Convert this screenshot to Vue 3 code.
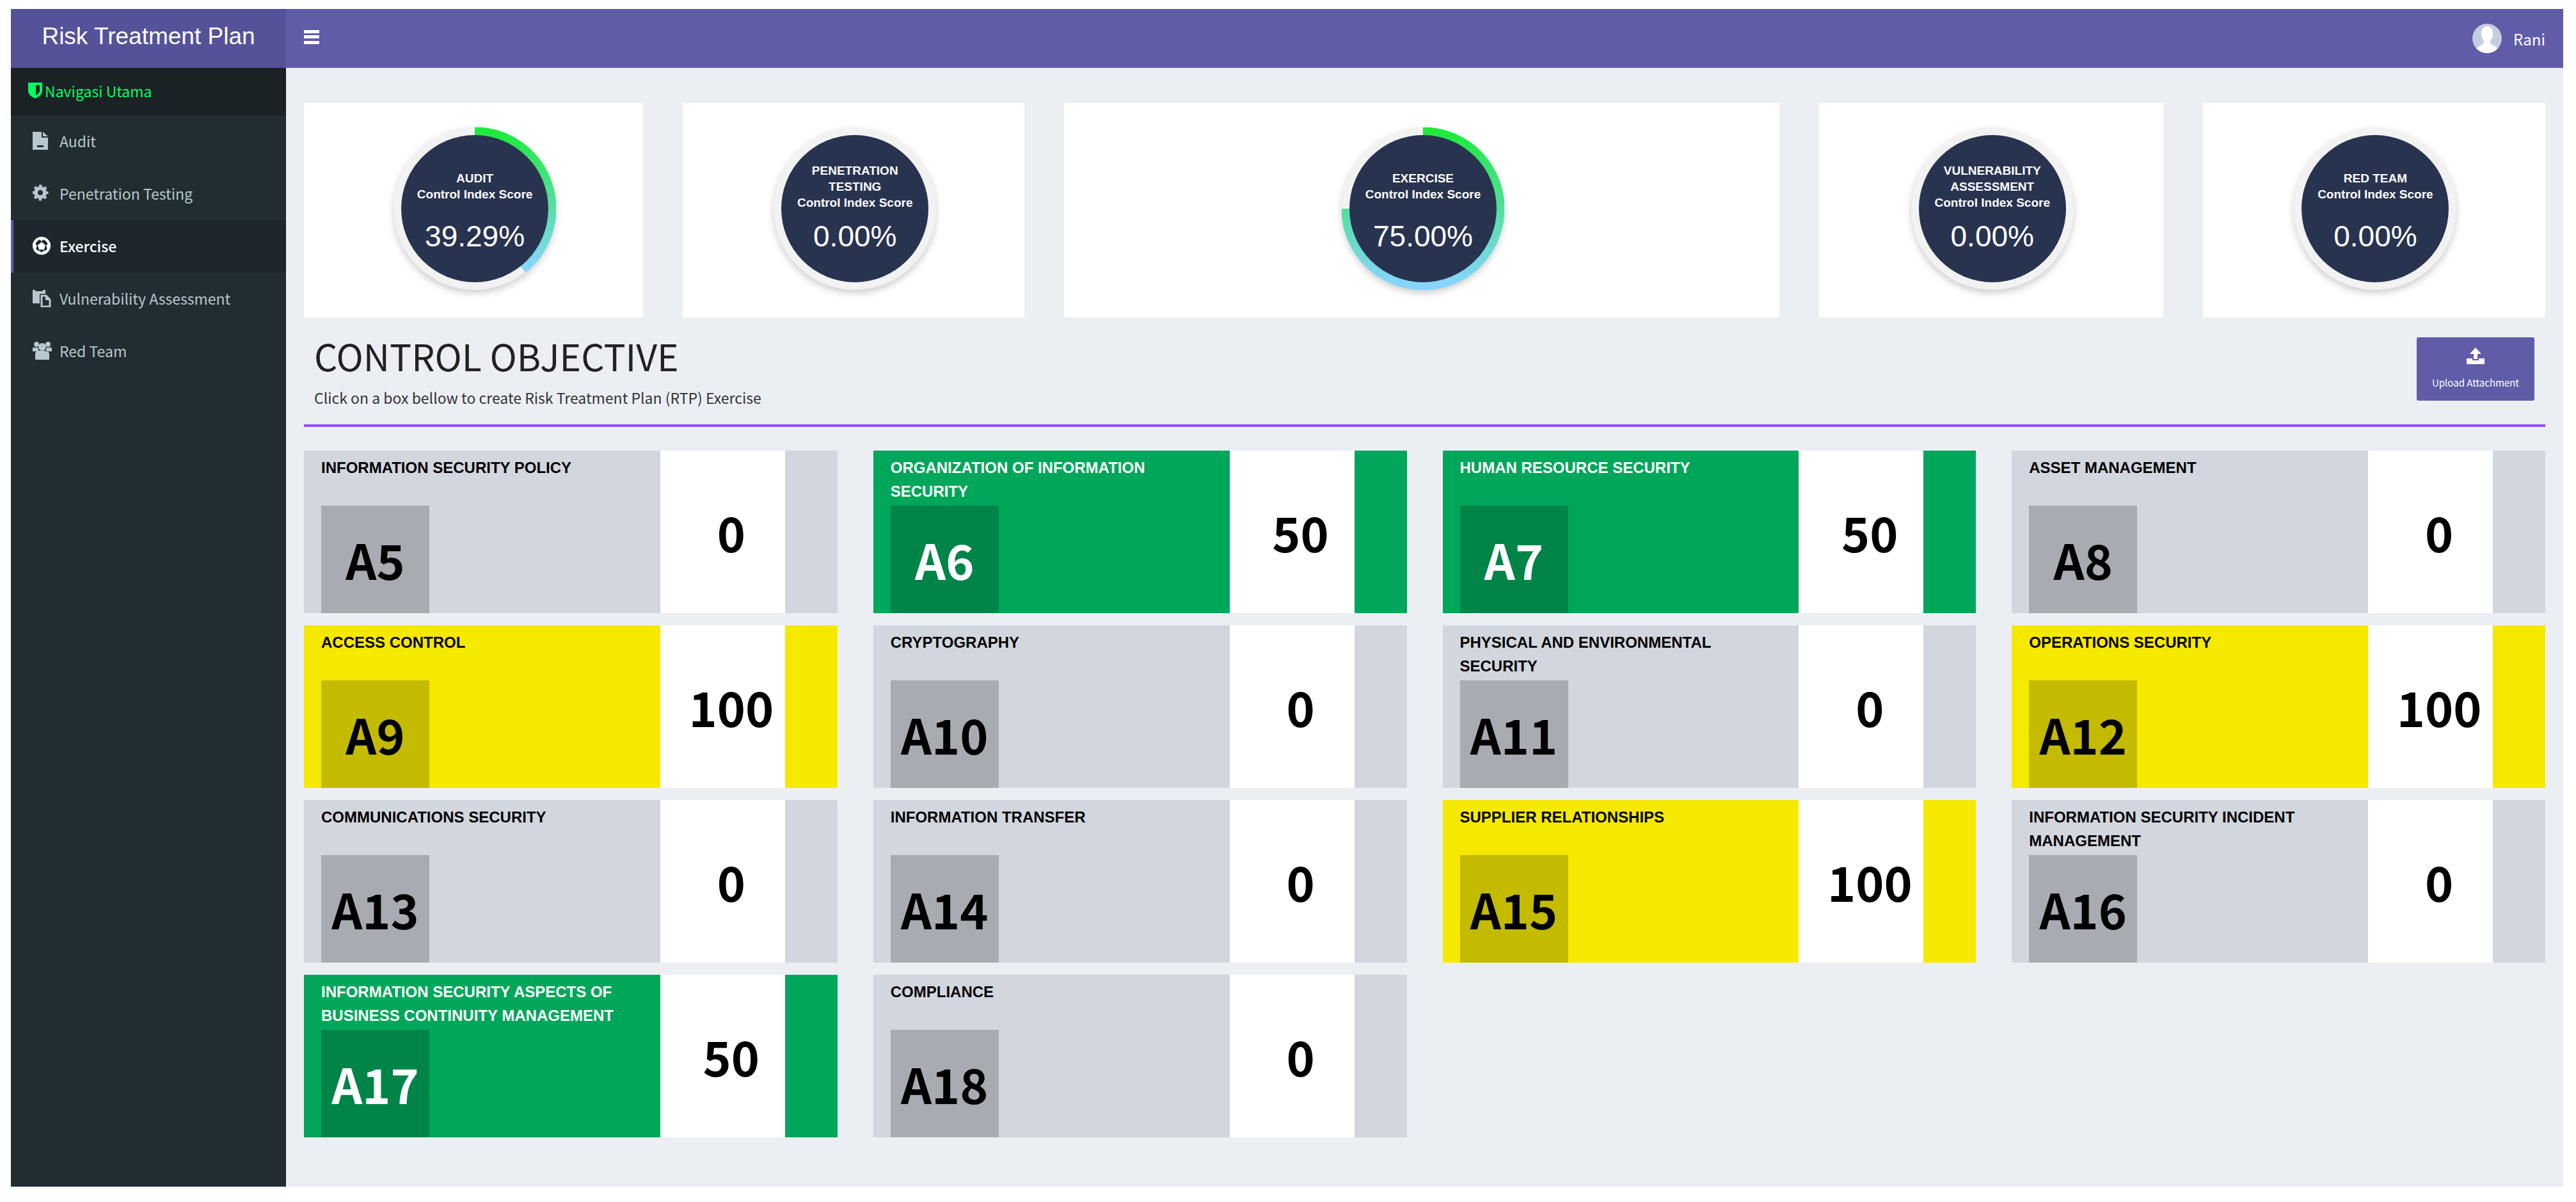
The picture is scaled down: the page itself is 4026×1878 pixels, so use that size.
<script setup>
const menu = [
  { name: 'Audit', icon: 'file' },
  { name: 'Penetration Testing', icon: 'gear' },
  { name: 'Exercise', icon: 'ball', active: true },
  { name: 'Vulnerability Assessment', icon: 'paste' },
  { name: 'Red Team', icon: 'users' },
]

const scores = [
  { title: ['AUDIT'], value: 39.29 },
  { title: ['PENETRATION', 'TESTING'], value: 0 },
  { title: ['EXERCISE'], value: 75 },
  { title: ['VULNERABILITY', 'ASSESSMENT'], value: 0 },
  { title: ['RED TEAM'], value: 0 },
]

const controls = [
  { code: 'A5', title: 'INFORMATION SECURITY POLICY', score: 0 },
  { code: 'A6', title: 'ORGANIZATION OF INFORMATION SECURITY', score: 50 },
  { code: 'A7', title: 'HUMAN RESOURCE SECURITY', score: 50 },
  { code: 'A8', title: 'ASSET MANAGEMENT', score: 0 },
  { code: 'A9', title: 'ACCESS CONTROL', score: 100 },
  { code: 'A10', title: 'CRYPTOGRAPHY', score: 0 },
  { code: 'A11', title: 'PHYSICAL AND ENVIRONMENTAL SECURITY', score: 0 },
  { code: 'A12', title: 'OPERATIONS SECURITY', score: 100 },
  { code: 'A13', title: 'COMMUNICATIONS SECURITY', score: 0 },
  { code: 'A14', title: 'INFORMATION TRANSFER', score: 0 },
  { code: 'A15', title: 'SUPPLIER RELATIONSHIPS', score: 100 },
  { code: 'A16', title: 'INFORMATION SECURITY INCIDENT MANAGEMENT', score: 0 },
  { code: 'A17', title: 'INFORMATION SECURITY ASPECTS OF BUSINESS CONTINUITY MANAGEMENT', score: 50 },
  { code: 'A18', title: 'COMPLIANCE', score: 0 },
]

const tone = (score) => (score >= 100 ? 'yellow' : score > 0 ? 'green' : 'grey')

// Arc from twelve o'clock, clockwise, on a 254-unit gauge
const arc = (value) => {
  const a = (value / 100) * 2 * Math.PI
  const r = 121
  const x = 127 + r * Math.sin(a)
  const y = 127 - r * Math.cos(a)
  return `M127 ${127 - r} A${r} ${r} 0 ${value > 50 ? 1 : 0} 1 ${x.toFixed(2)} ${y.toFixed(2)}`
}
</script>

<template>
  <div class="page">
    <header class="topbar">
      <a class="brand" href="#">Risk Treatment Plan</a>
      <nav class="navbar">
        <button class="toggle" type="button" aria-label="Toggle navigation">
          <svg viewBox="0 0 24 22" width="24" height="22"><path d="M0 0h24v5H0zM0 8h24v5H0zM0 17h24v5H0z" fill="currentColor" /></svg>
        </button>
        <a class="user" href="#">
          <svg viewBox="0 0 46 46" width="46" height="46">
            <clipPath id="face"><circle cx="23" cy="23" r="23" /></clipPath>
            <g clip-path="url(#face)">
              <rect width="46" height="46" fill="#c5cde0" />
              <path d="M23 4c6 0 9 5 9 11 0 6-2 9-4 12 0 4 1 5 5 7 4 2 7 3 8 12H5c1-9 4-10 8-12 4-2 5-3 5-7-2-3-4-6-4-12 0-6 3-11 9-11z" fill="#fff" />
            </g>
          </svg>
          <span>Rani</span>
        </a>
      </nav>
    </header>

    <div class="body">
      <aside class="sidebar">
        <div class="side-title">
          <svg viewBox="0 0 22 25" width="22" height="25"><path d="M0 0h22v12c0 7-5 10-11 13C5 22 0 19 0 12zM12 4v16c3-2 6-4 6-8V4z" fill="currentColor" fill-rule="evenodd" /></svg>
          <span>Navigasi Utama</span>
        </div>
        <a v-for="m in menu" :key="m.name" href="#" class="item" :class="{ active: m.active }">
          <svg class="icon" viewBox="0 0 30 28" width="30" height="28">
            <path v-if="m.icon === 'file'" d="M0 0h14v9h10v19H0zM16 0l8 7h-8zM7 21v3h10v-3z" fill="currentColor" fill-rule="evenodd" />
            <g v-else-if="m.icon === 'gear'">
              <circle cx="12" cy="13" r="7" fill="none" stroke="currentColor" stroke-width="6" />
              <circle cx="12" cy="13" r="10" fill="none" stroke="currentColor" stroke-width="5" stroke-dasharray="4 3.85" stroke-dashoffset="2" />
            </g>
            <g v-else-if="m.icon === 'ball'">
              <circle cx="14" cy="14" r="12" fill="none" stroke="currentColor" stroke-width="4" />
              <path d="M14 8l6 5-2 7h-8l-2-7zM8 1h12l-6 6zM0 10l7 3-2 7-4-2zM28 10l-7 3 2 7 4-2zM6 21l6 1 1 6-7-3zM22 21l-6 1-1 6 7-3z" fill="currentColor" />
            </g>
            <g v-else-if="m.icon === 'paste'">
              <path d="M0 1h4v2h12V1h4v6h-9v15H0z" fill="currentColor" />
              <path d="M14 10h7l6 6v11H14z" fill="none" stroke="currentColor" stroke-width="3" />
              <path d="M20 9l8 8h-8z" fill="currentColor" />
            </g>
            <g v-else fill="currentColor">
              <circle cx="6" cy="4" r="4" /><circle cx="24" cy="4" r="4" /><circle cx="15" cy="8" r="6" />
              <path d="M0 9h8l2 6H0zM30 9h-8l-2 6h10zM4 28V19c0-3 3-5 5-5h12c2 0 5 2 5 5v9z" />
            </g>
          </svg>
          <span>{{ m.name }}</span>
        </a>
      </aside>

      <main class="content">
        <section class="scores">
          <article v-for="s in scores" :key="s.title[0]" class="score-card">
            <div class="gauge">
              <svg v-if="s.value" class="ring" viewBox="0 0 254 254">
                <defs>
                  <linearGradient id="sweep" x1="0" y1="0" x2="0" y2="1">
                    <stop offset="0" stop-color="#1eea3c" />
                    <stop offset="1" stop-color="#87d5ff" />
                  </linearGradient>
                </defs>
                <path :d="arc(s.value)" fill="none" stroke="url(#sweep)" stroke-width="13" />
              </svg>
              <div class="disc">
                <div class="disc-title">
                  <span v-for="t in s.title" :key="t">{{ t }}</span>
                  <span>Control Index Score</span>
                </div>
                <div class="disc-value">{{ s.value.toFixed(2) }}%</div>
              </div>
            </div>
          </article>
        </section>

        <section class="heading">
          <div>
            <h1>CONTROL OBJECTIVE</h1>
            <p>Click on a box bellow to create Risk Treatment Plan (RTP) Exercise</p>
          </div>
          <button class="upload" type="button">
            <svg viewBox="0 0 28 26" width="28" height="26"><path d="M14 0l9 10h-6v8h-6v-8H5zM0 17h9v3h10v-3h9v9H0z" fill="currentColor" /></svg>
            <span>Upload Attachment</span>
          </button>
        </section>

        <section class="controls">
          <a v-for="c in controls" :key="c.code" href="#" class="control" :class="tone(c.score)">
            <div class="info">
              <div class="name">{{ c.title }}</div>
              <div class="code">{{ c.code }}</div>
            </div>
            <div class="value">{{ c.score }}</div>
          </a>
        </section>
      </main>
    </div>
  </div>
</template>

<style>
body {
  margin: 0;
  background: #fff;
}
</style>

<style scoped>
.page {
  box-sizing: border-box;
  min-height: 100vh;
  padding: 14px 20px 24px 17px;
  display: flex;
  flex-direction: column;
  font-family: "Noto Sans CJK SC", "Noto Sans", sans-serif;
  font-size: 23px;
}
a {
  color: inherit;
  text-decoration: none;
}
button {
  border: 0;
  padding: 0;
  font-family: inherit;
  color: #fff;
}
svg {
  display: block;
  flex: none;
}
.topbar {
  display: flex;
  height: 92px;
  color: #fff;
}
.brand {
  width: 430px;
  flex: none;
  background: #555299;
  font: 37px/86px "Liberation Sans", Arial, sans-serif;
  text-align: center;
}
.navbar {
  flex: 1;
  display: flex;
  align-items: center;
  justify-content: space-between;
  padding: 0 28px;
  background: #605ca8;
}
.toggle {
  background: none;
  padding-bottom: 4px;
}
.user {
  display: flex;
  align-items: center;
  gap: 18px;
  font-size: 24px;
}
.body {
  flex: 1;
  display: flex;
}
.sidebar {
  width: 430px;
  flex: none;
  background: #222d32;
  color: #b8c7ce;
}
.side-title,
.item {
  box-sizing: border-box;
  display: flex;
  align-items: center;
  padding-bottom: 3px;
}
.side-title {
  gap: 4px;
  height: 74px;
  padding-left: 27px;
  background: #1a2226;
  color: #00ff62;
}
.item {
  gap: 12px;
  height: 82px;
  padding-left: 30px;
  border-left: 4px solid transparent;
}
.item.active {
  background: #1e282c;
  border-left-color: #605ca8;
  color: #fff;
  font-weight: 500;
}
.content {
  flex: 1;
  padding: 55px 28px 76px;
  background: #ebeff4;
}
.scores {
  display: grid;
  grid-template-columns: 530fr 534fr 1117fr 538fr 535fr;
  gap: 62px;
}
.score-card {
  display: flex;
  justify-content: center;
  padding: 38px 0 43px 4px;
  background: #fff;
}
.gauge {
  display: grid;
  place-items: center;
  width: 254px;
  height: 254px;
  border-radius: 50%;
  background: #f2f2f2;
  box-shadow: 0 5px 12px rgba(0, 0, 0, 0.2);
}
.ring,
.disc {
  grid-area: 1 / 1;
}
.ring {
  width: 254px;
  height: 254px;
}
.disc {
  box-sizing: border-box;
  width: 230px;
  height: 230px;
  padding-top: 27px;
  border-radius: 50%;
  background: #28334f;
  color: #fff;
  text-align: center;
  font-family: "Liberation Sans", Arial, sans-serif;
}
.disc-title {
  display: flex;
  flex-direction: column;
  justify-content: center;
  height: 106px;
  font-size: 19px;
  font-weight: 700;
  line-height: 25px;
}
.disc-value {
  font-size: 46px;
  line-height: 50px;
}
.heading {
  display: flex;
  justify-content: space-between;
  align-items: flex-start;
  margin-bottom: 37px;
  padding: 31px 17px 26px 16px;
  border-bottom: 4px solid #8f4df8;
}
h1 {
  margin: 0;
  font-size: 57px;
  font-weight: 400;
  line-height: 56px;
  color: #222;
}
p {
  margin: 22px 0 0;
  line-height: 32px;
  color: #333;
}
.upload {
  display: flex;
  flex-direction: column;
  align-items: center;
  gap: 18px;
  width: 184px;
  height: 99px;
  padding-top: 16px;
  border-radius: 3px;
  background: #605ca8;
  font-size: 15px;
  line-height: 22px;
}
.controls {
  display: grid;
  grid-template-columns: repeat(4, 1fr);
  gap: 19px 56px;
}
.control {
  display: grid;
  grid-template-columns: 557fr 195fr 82fr;
  height: 254px;
  background: #d2d6de;
  color: #000;
}
.control.green {
  background: #00a65a;
}
.control.yellow {
  background: #f6e900;
}
.info {
  display: flex;
  flex-direction: column;
  justify-content: space-between;
  padding: 8px 27px 0;
  font-weight: 700;
}
.green .info {
  color: #fff;
}
.name {
  font: 700 24px/37px "Liberation Sans", Arial, sans-serif;
}
.code {
  width: 169px;
  height: 168px;
  background: rgba(0, 0, 0, 0.2);
  font-size: 75px;
  line-height: 168px;
  text-align: center;
}
.value {
  padding-left: 27px;
  background: #fff;
  color: #000;
  font-size: 75px;
  font-weight: 700;
  line-height: 254px;
  text-align: center;
}
</style>
